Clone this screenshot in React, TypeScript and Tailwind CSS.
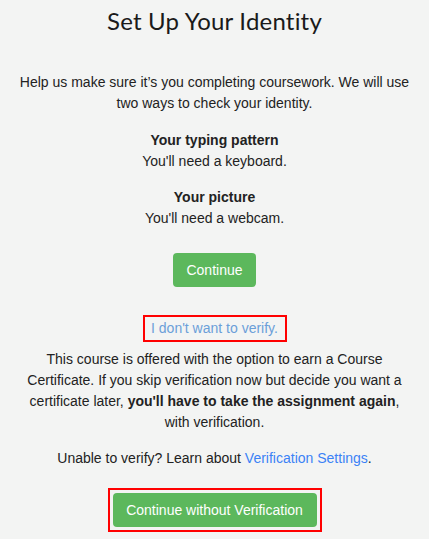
import React from "react";

export default function App() {
  return (
    <div className="min-h-[539px] w-full bg-[#f3f4f3] text-[#222] text-[14px] leading-[21px] text-center" style={{ fontFamily: '"Liberation Sans", Arial, sans-serif' }}>
      <div className="pt-[5px] flex flex-col items-center">
        <h1 className="text-[24px] leading-[32px] font-normal text-[#1a1a1a] tracking-[0.2px]" style={{ fontFamily: 'Lato, "Noto Sans", sans-serif' }}>
          Set Up Your Identity
        </h1>
        <p className="mt-[35px] px-[16px]">
          Help us make sure it’s you completing coursework. We will use two ways to check your identity.
        </p>
        <div className="mt-[16px]">
          <div className="font-bold">Your typing pattern</div>
          <div>You'll need a keyboard.</div>
        </div>
        <div className="mt-[15px]">
          <div className="font-bold">Your picture</div>
          <div>You'll need a webcam.</div>
        </div>
        <button className="mt-[24px] h-[34px] w-[83px] rounded-[4px] bg-[#5cb85c] text-white text-[14px]">
          Continue
        </button>
        <div className="mt-[28px] h-[27px] w-[144px] border-2 border-[#ff0000] flex items-center justify-center">
          <span className="text-[#6b9fd9]">I don't want to verify.</span>
        </div>
        <p className="mt-[7px] px-[20px]">
          This course is offered with the option to earn a Course Certificate. If you skip verification now but decide you want a certificate later, <b>you'll have to take the assignment again</b>, with verification.
        </p>
        <p className="mt-[15px]">
          Unable to verify? Learn about <span className="text-[#3b82f6]">Verification Settings</span>.
        </p>
        <div className="mt-[19px] border-2 border-[#ff0000] p-[3px]">
          <button className="h-[34px] w-[204px] rounded-[4px] bg-[#5cb85c] text-white text-[14px] block">
            Continue without Verification
          </button>
        </div>
      </div>
    </div>
  );
}
